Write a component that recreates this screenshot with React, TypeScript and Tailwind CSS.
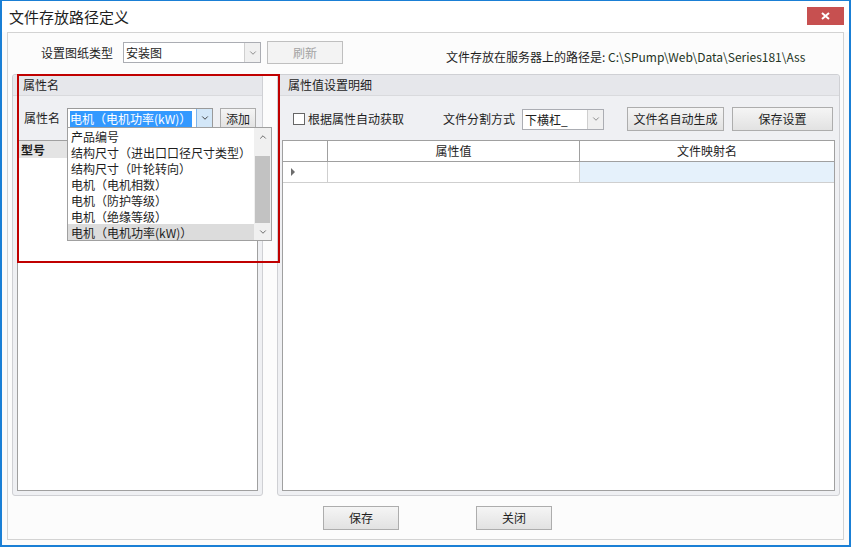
import { ChevronDown, ChevronUp } from "lucide-react";

const btn =
  "flex items-center justify-center border border-[#adadad] bg-linear-to-b from-[#f5f5f5] to-[#e2e2e2] text-[12px] leading-none";

const options = [
  "产品编号",
  "结构尺寸（进出口口径尺寸类型）",
  "结构尺寸（叶轮转向）",
  "电机（电机相数）",
  "电机（防护等级）",
  "电机（绝缘等级）",
  "电机（电机功率(kW)）",
];

function GroupBox({ title, className, children }: { title: string; className: string; children: React.ReactNode }) {
  return (
    <div className={`flex flex-col border border-[#cfd0d4] rounded-[3px] bg-[#eff0f3] ${className}`}>
      <div className="h-[21px] shrink-0 border-b border-[#d9dadd] bg-[#e6e7eb] pl-[10px] flex items-center leading-none rounded-t-[3px]">
        {title}
      </div>
      {children}
    </div>
  );
}

export default function App() {
  return (
    <div className="w-[851px] h-[547px] flex flex-col overflow-hidden border-t border-x-2 border-b-2 border-[#1a7fd5] bg-[#fbfbfb] text-[12px] text-[#1e1e1e] font-['Noto_Sans_CJK_SC',sans-serif]">
      {/* title bar */}
      <div className="h-[31px] shrink-0 flex items-start justify-between pl-[7px] pr-[5px] bg-white">
        <span className="mt-[6px] text-[15px] leading-[20px]">文件存放路径定义</span>
        <div className="mt-[6px] w-[37px] h-[18px] bg-[#c75050] flex items-center justify-center">
          <svg width="9" height="8" viewBox="0 0 9 8">
            <path d="M1 1 L8 7 M8 1 L1 7" stroke="white" strokeWidth="2" />
          </svg>
        </div>
      </div>

      {/* body panel */}
      <div className="mx-[5px] h-[508px] shrink-0 border border-[#d3d3d3] bg-[#fcfcfc] flex flex-col">
        {/* top row */}
        <div className="mt-[8px] h-[23px] flex items-center pl-[33px]">
          <span className="leading-none">设置图纸类型</span>
          <div className="ml-[10px] w-[138px] h-[21px] border border-[#abadb3] bg-white flex">
            <span className="flex-1 pl-[2px] leading-[19px]">安装图</span>
            <div className="w-[16px] border-l border-[#cfcfcf] bg-[#f0f0f0] flex items-center justify-center text-[#7a7a7a]">
              <ChevronDown size={10} strokeWidth={2} />
            </div>
          </div>
          <div className="ml-[6px] w-[76px] h-[23px] border border-[#bfbfbf] bg-[#f3f3f3] text-[#a3a3a3] flex items-center justify-center leading-none">
            刷新
          </div>
          <span className="ml-[103px] mt-[8px] leading-none whitespace-nowrap">
            文件存放在服务器上的路径是: <span className="text-[#243424]">{"C:\\SPump\\Web\\Data\\Series181\\Ass"}</span>
          </span>
        </div>

        {/* group boxes */}
        <div className="relative mt-[10px] h-[422px] flex pl-[4px]">
          <GroupBox title="属性名" className="w-[251px]">
            <div className="mt-[12px] h-[21px] flex items-start pl-[11px]">
              <span className="leading-[20px]">属性名</span>
              <div className="relative ml-[7px] w-[146px] h-[20px] border border-[#9a9a9a] bg-white flex">
                <div className="flex-1 pl-[2px] pt-[1px]">
                  <span className="inline-block h-[16px] leading-[16px] bg-[#3399ff] text-white pr-[1px]">
                    电机（电机功率(kW)）
                  </span>
                </div>
                <div className="w-[16px] border-l border-[#7eb4ea] bg-[#d3e7f8] flex items-center justify-center text-[#333]">
                  <ChevronDown size={10} strokeWidth={2.2} />
                </div>

                {/* dropdown list */}
                <div className="absolute left-[-1px] top-full z-10 w-[205px] h-[114px] border border-[#a0a0a0] bg-white flex">
                  <div className="flex-1 flex flex-col">
                    {options.map((o, i) => (
                      <div
                        key={o}
                        className={`h-[16px] shrink-0 pt-[2px] pl-[3px] whitespace-nowrap ${
                          i === options.length - 1 ? "bg-[#dcdcdc]" : ""
                        }`}
                      >
                        <div className="leading-[14px]">{o}</div>
                      </div>
                    ))}
                  </div>
                  <div className="w-[17px] bg-[#f0f0f0] flex flex-col text-[#606060]">
                    <div className="h-[17px] flex items-center justify-center">
                      <ChevronUp size={10} strokeWidth={2.2} />
                    </div>
                    <div className="h-[11px]" />
                    <div className="h-[67px] mx-[1px] bg-[#c2c2c2]" />
                    <div className="h-[17px] flex items-center justify-center">
                      <ChevronDown size={10} strokeWidth={2.2} />
                    </div>
                  </div>
                </div>
              </div>
              <div className={`${btn} ml-[7px] w-[36px] h-[21px]`}>添加</div>
            </div>
            <div className="mt-[11px] mx-[4px] mb-[4px] flex-1 border border-[#a0a0a0] bg-white">
              <div className="h-[17px] bg-[#e4e4e4] pl-[3px] leading-[17px] font-bold">型号</div>
            </div>
          </GroupBox>

          <GroupBox title="属性值设置明细" className="ml-[14px] w-[563px]">
            <div className="mt-[11px] h-[24px] flex items-center pl-[15px]">
              <div className="w-[12px] h-[12px] border border-[#666] bg-white" />
              <span className="ml-[3px] leading-none">根据属性自动获取</span>
              <span className="ml-[39px] leading-none">文件分割方式</span>
              <div className="ml-[7px] w-[82px] h-[21px] border border-[#abadb3] bg-white flex">
                <span className="flex-1 pl-[2px] leading-[19px]">下横杠_</span>
                <div className="w-[16px] border-l border-[#cfcfcf] bg-[#f0f0f0] flex items-center justify-center text-[#7a7a7a]">
                  <ChevronDown size={10} strokeWidth={2} />
                </div>
              </div>
              <div className={`${btn} ml-[23px] w-[97px] h-[24px]`}>文件名自动生成</div>
              <div className={`${btn} ml-[8px] w-[101px] h-[24px]`}>保存设置</div>
            </div>
            <div className="mt-[9px] mx-[4px] mb-[4px] flex-1 border border-[#a0a0a0] bg-white flex flex-col">
              <div className="h-[21px] border-b border-[#a0a0a0] flex">
                <div className="w-[45px] border-r border-[#a0a0a0]" />
                <div className="w-[252px] border-r border-[#a0a0a0] flex items-center justify-center leading-none">属性值</div>
                <div className="flex-1 flex items-center justify-center leading-none">文件映射名</div>
              </div>
              <div className="h-[21px] border-b border-[#cfcfcf] flex">
                <div className="w-[45px] border-r border-[#cfcfcf] flex items-center pl-[8px]">
                  <div className="w-0 h-0 border-y-[4px] border-y-transparent border-l-[4px] border-l-[#6d6d6d]" />
                </div>
                <div className="w-[252px] border-r border-[#cfcfcf]" />
                <div className="flex-1 bg-[#e5f1fb]" />
              </div>
            </div>
          </GroupBox>

          {/* red highlight frame */}
          <div className="pointer-events-none absolute left-[9px] top-0 z-20 w-[263px] h-[189px] border-2 border-[#c00000]" />
        </div>

        {/* bottom buttons */}
        <div className="mt-[10px] h-[24px] flex pl-[315px] gap-[77px]">
          <div className={`${btn} w-[76px] h-[24px]`}>保存</div>
          <div className={`${btn} w-[76px] h-[24px]`}>关闭</div>
        </div>
      </div>
    </div>
  );
}
